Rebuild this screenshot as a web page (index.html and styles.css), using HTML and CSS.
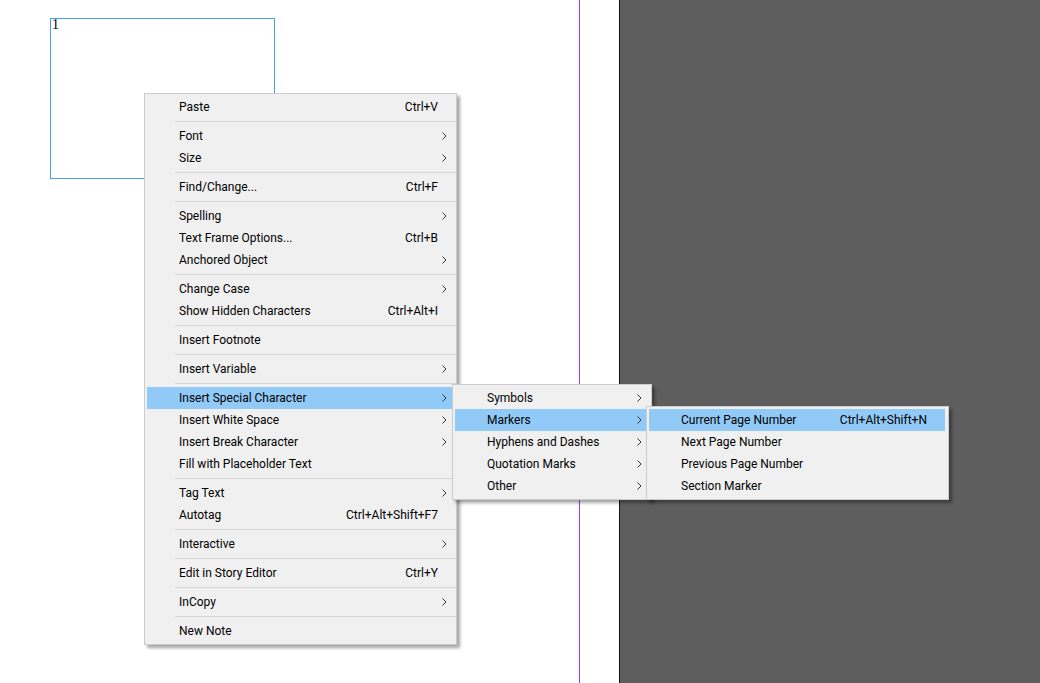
FILE: index.html
```html
<!DOCTYPE html>
<html>
<head>
<meta charset="utf-8">
<link rel="stylesheet" href="styles.css">
</head>
<body>
<div class="canvas">
  <div class="page">
    <div class="text-frame"><span class="page-num">1</span></div>
  </div>
  <div class="margin-guide"></div>
  <div class="gutter"></div>
  <div class="page-edge"></div>
  <div class="pasteboard"></div>
</div>

<div class="menu menu-main">
  <div class="item"><span class="label">Paste</span><span class="key">Ctrl+V</span><span class="arr"></span></div>
  <div class="sep"></div>
  <div class="item"><span class="label">Font</span><span class="key"></span><span class="arr"><svg width="5" height="8" viewBox="0 0 5 8"><polyline points="0.5,0.5 4,4 0.5,7.5"/></svg></span></div>
  <div class="item"><span class="label">Size</span><span class="key"></span><span class="arr"><svg width="5" height="8" viewBox="0 0 5 8"><polyline points="0.5,0.5 4,4 0.5,7.5"/></svg></span></div>
  <div class="sep"></div>
  <div class="item"><span class="label">Find/Change...</span><span class="key">Ctrl+F</span><span class="arr"></span></div>
  <div class="sep"></div>
  <div class="item"><span class="label">Spelling</span><span class="key"></span><span class="arr"><svg width="5" height="8" viewBox="0 0 5 8"><polyline points="0.5,0.5 4,4 0.5,7.5"/></svg></span></div>
  <div class="item"><span class="label">Text Frame Options...</span><span class="key">Ctrl+B</span><span class="arr"></span></div>
  <div class="item"><span class="label">Anchored Object</span><span class="key"></span><span class="arr"><svg width="5" height="8" viewBox="0 0 5 8"><polyline points="0.5,0.5 4,4 0.5,7.5"/></svg></span></div>
  <div class="sep"></div>
  <div class="item"><span class="label">Change Case</span><span class="key"></span><span class="arr"><svg width="5" height="8" viewBox="0 0 5 8"><polyline points="0.5,0.5 4,4 0.5,7.5"/></svg></span></div>
  <div class="item"><span class="label">Show Hidden Characters</span><span class="key">Ctrl+Alt+I</span><span class="arr"></span></div>
  <div class="sep"></div>
  <div class="item"><span class="label">Insert Footnote</span><span class="key"></span><span class="arr"></span></div>
  <div class="sep"></div>
  <div class="item"><span class="label">Insert Variable</span><span class="key"></span><span class="arr"><svg width="5" height="8" viewBox="0 0 5 8"><polyline points="0.5,0.5 4,4 0.5,7.5"/></svg></span></div>
  <div class="sep"></div>
  <div class="item active"><span class="label">Insert Special Character</span><span class="key"></span><span class="arr"><svg width="5" height="8" viewBox="0 0 5 8"><polyline points="0.5,0.5 4,4 0.5,7.5"/></svg></span></div>
  <div class="item"><span class="label">Insert White Space</span><span class="key"></span><span class="arr"><svg width="5" height="8" viewBox="0 0 5 8"><polyline points="0.5,0.5 4,4 0.5,7.5"/></svg></span></div>
  <div class="item"><span class="label">Insert Break Character</span><span class="key"></span><span class="arr"><svg width="5" height="8" viewBox="0 0 5 8"><polyline points="0.5,0.5 4,4 0.5,7.5"/></svg></span></div>
  <div class="item"><span class="label">Fill with Placeholder Text</span><span class="key"></span><span class="arr"></span></div>
  <div class="sep"></div>
  <div class="item"><span class="label">Tag Text</span><span class="key"></span><span class="arr"><svg width="5" height="8" viewBox="0 0 5 8"><polyline points="0.5,0.5 4,4 0.5,7.5"/></svg></span></div>
  <div class="item"><span class="label">Autotag</span><span class="key">Ctrl+Alt+Shift+F7</span><span class="arr"></span></div>
  <div class="sep"></div>
  <div class="item"><span class="label">Interactive</span><span class="key"></span><span class="arr"><svg width="5" height="8" viewBox="0 0 5 8"><polyline points="0.5,0.5 4,4 0.5,7.5"/></svg></span></div>
  <div class="sep"></div>
  <div class="item"><span class="label">Edit in Story Editor</span><span class="key">Ctrl+Y</span><span class="arr"></span></div>
  <div class="sep"></div>
  <div class="item"><span class="label">InCopy</span><span class="key"></span><span class="arr"><svg width="5" height="8" viewBox="0 0 5 8"><polyline points="0.5,0.5 4,4 0.5,7.5"/></svg></span></div>
  <div class="sep"></div>
  <div class="item"><span class="label">New Note</span><span class="key"></span><span class="arr"></span></div>
</div>

<div class="menu menu-special">
  <div class="item"><span class="label">Symbols</span><span class="key"></span><span class="arr"><svg width="5" height="8" viewBox="0 0 5 8"><polyline points="0.5,0.5 4,4 0.5,7.5"/></svg></span></div>
  <div class="item active"><span class="label">Markers</span><span class="key"></span><span class="arr"><svg width="5" height="8" viewBox="0 0 5 8"><polyline points="0.5,0.5 4,4 0.5,7.5"/></svg></span></div>
  <div class="item"><span class="label">Hyphens and Dashes</span><span class="key"></span><span class="arr"><svg width="5" height="8" viewBox="0 0 5 8"><polyline points="0.5,0.5 4,4 0.5,7.5"/></svg></span></div>
  <div class="item"><span class="label">Quotation Marks</span><span class="key"></span><span class="arr"><svg width="5" height="8" viewBox="0 0 5 8"><polyline points="0.5,0.5 4,4 0.5,7.5"/></svg></span></div>
  <div class="item"><span class="label">Other</span><span class="key"></span><span class="arr"><svg width="5" height="8" viewBox="0 0 5 8"><polyline points="0.5,0.5 4,4 0.5,7.5"/></svg></span></div>
</div>

<div class="menu menu-markers">
  <div class="item active"><span class="label">Current Page Number</span><span class="key">Ctrl+Alt+Shift+N</span><span class="arr"></span></div>
  <div class="item"><span class="label">Next Page Number</span><span class="key"></span><span class="arr"></span></div>
  <div class="item"><span class="label">Previous Page Number</span><span class="key"></span><span class="arr"></span></div>
  <div class="item"><span class="label">Section Marker</span><span class="key"></span><span class="arr"></span></div>
</div>
</body>
</html>
```
FILE: styles.css
```css
html, body {
  margin: 0;
  padding: 0;
  background: #ffffff;
}

.canvas {
  display: flex;
  width: 1040px;
  height: 683px;
  overflow: hidden;
}

.page {
  width: 579px;
  flex: none;
  padding: 18px 0 0 50px;
  box-sizing: border-box;
  background: #ffffff;
}

.text-frame {
  width: 225px;
  height: 161px;
  box-sizing: border-box;
  border: 1px solid #4c9bf6;
  font-family: "Liberation Serif", serif;
  font-size: 14px;
  line-height: 12px;
  color: #000;
  padding-left: 1px;
}

.margin-guide {
  width: 1px;
  flex: none;
  background: #9a3cf2;
}

.gutter {
  width: 39px;
  flex: none;
  background: #ffffff;
}

.page-edge {
  width: 1px;
  flex: none;
  background: #111111;
}

.pasteboard {
  flex: 1;
  background: #5e5e5e;
}

.menu {
  position: absolute;
  box-sizing: border-box;
  background: #f0f0f0;
  border: 1px solid #cccccc;
  padding: 2px 3px 2px 2px;
  box-shadow: 3px 3px 3px rgba(0, 0, 0, 0.35);
  font-family: "Roboto", "Noto Sans", sans-serif;
  font-size: 12px;
  color: #000;
}

.menu-main {
  left: 144px;
  top: 93px;
  width: 313px;
}

.menu-special {
  left: 452px;
  top: 384px;
  width: 200px;
}

.menu-markers {
  left: 646px;
  top: 406px;
  width: 303px;
}

.item {
  display: grid;
  grid-template-columns: 1fr auto 15px;
  align-items: center;
  height: 22px;
  line-height: 22px;
  padding-left: 32px;
  white-space: nowrap;
}

.menu-markers .item {
  grid-template-columns: 1fr auto 18px;
}

.item.active {
  background: #91c9f7;
}

.arr {
  display: flex;
  align-items: center;
  padding-left: 4px;
  height: 22px;
}

.arr svg polyline {
  fill: none;
  stroke: #333333;
  stroke-width: 1;
}

.sep {
  height: 7px;
  margin-left: 28px;
  position: relative;
}

.sep::after {
  content: "";
  position: absolute;
  left: 0;
  right: -3px;
  top: 3px;
  height: 1px;
  background: #d7d7d7;
}
```
